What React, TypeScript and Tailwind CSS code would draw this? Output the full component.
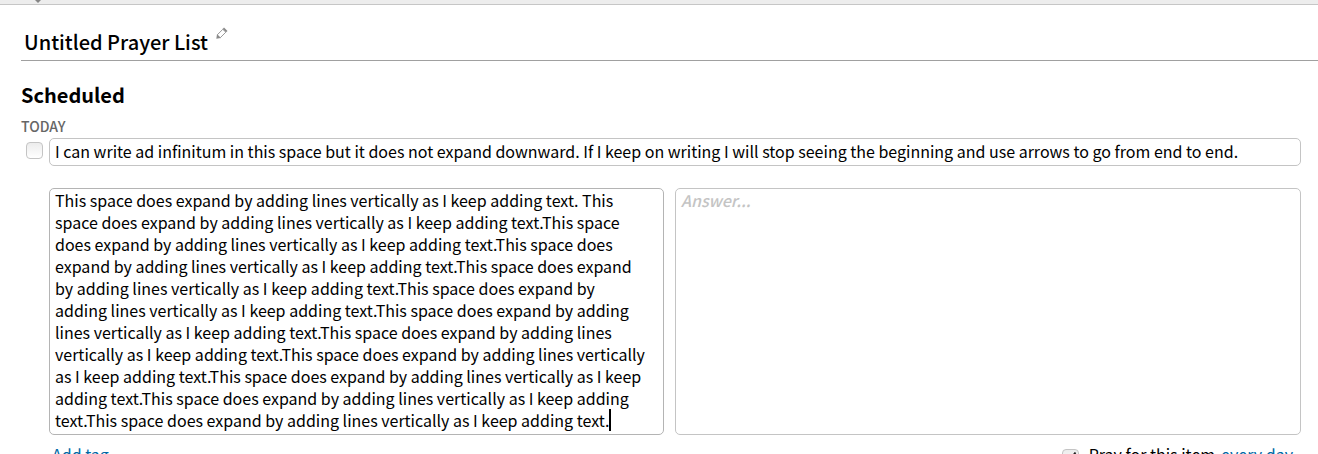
const NOTE_SENTENCE = "This space does expand by adding lines vertically as I keep adding text.";
const NOTE = `${NOTE_SENTENCE} ${NOTE_SENTENCE.repeat(11)}`;

function PencilIcon() {
  return (
    <svg viewBox="0 0 12 12" className="w-3 h-3" aria-hidden="true">
      <path d="M8 .6 11.500 3.900 9.800 5.500 6.500 2.300Z" fill="#8a8a8a" />
      <path d="M6.800 2.300 9.800 5.200 4.200 10.800 1.200 7.900Z" fill="#fff" stroke="#999" strokeWidth="1" />
      <path d="M1 7.300 4.700 10.900.3 11.800Z" fill="#8a8a8a" />
    </svg>
  );
}

function TopBar() {
  return (
    <div className="h-[5px] bg-[#ededed] border-b border-[#c6c6c6] overflow-hidden">
      <svg viewBox="0 0 6 3" className="block ml-[35px] w-[6px] h-[3px]" aria-hidden="true">
        <path d="M0 0H6L3 3Z" fill="#858585" />
      </svg>
    </div>
  );
}

function ItemFooter() {
  return (
    <div className="flex justify-between pl-[3px] pr-2 pt-2 leading-[22px]">
      <a href="#tag" className="text-[#0068a5]">
        Add tag
      </a>
      <div className="flex">
        <label className="flex">
          <input type="checkbox" defaultChecked className="peer sr-only" />
          <span className="mt-[6px] mr-[10px] w-[17px] h-[17px] rounded border border-[#c4c4c4] bg-linear-to-b from-[#ececec] to-white">
            <svg viewBox="0 0 15 15" className="w-[15px] h-[15px]" aria-hidden="true">
              <path d="M3 8 6 11.500 12.500 2.500" fill="none" stroke="#222" strokeWidth="2" />
            </svg>
          </span>
          Pray for this item
        </label>
        <a href="#schedule" className="ml-[6px] text-[#0068a5]">
          every day
        </a>
      </div>
    </div>
  );
}

export default function App() {
  return (
    <div className="h-screen overflow-hidden bg-white text-black text-base font-['Noto_Sans_CJK_SC',sans-serif]">
      <TopBar />
      <main className="pl-[21px]">
        <header className="flex items-start pt-[22px] pl-[3px] pb-1 border-b border-[#a0a0a0]">
          <h1 className="text-[20px] leading-[29px] font-medium">Untitled Prayer List</h1>
          <button type="button" aria-label="Rename list" className="ml-2">
            <PencilIcon />
          </button>
        </header>

        <section className="pr-[17px]">
          <h2 className="pt-[19px] text-[20px] leading-[29px] font-bold">Scheduled</h2>
          <h3 className="pt-[7px] pb-[2px] text-[14px] leading-[20px] font-medium text-[#666]">TODAY</h3>

          <div className="flex">
            <div className="w-7 pl-[5px] pt-1">
              <input
                type="checkbox"
                aria-label="Prayed"
                className="block appearance-none w-[17px] h-[17px] rounded border border-[#c4c4c4] bg-linear-to-b from-[#ececec] to-white"
              />
            </div>
            <div className="flex-1 min-w-0">
              <input
                type="text"
                aria-label="Title"
                defaultValue="I can write ad infinitum in this space but it does not expand downward. If I keep on writing I will stop seeing the beginning and use arrows to go from end to end."
                className="block w-full h-7 px-[5px] pb-[3px] rounded-[5px] border border-[#c4c4c4]"
              />

              <div className="mt-[22px] grid grid-cols-[615fr_626fr] gap-[11px]">
                <div className="relative">
                  <textarea
                    aria-label="Notes"
                    rows={11}
                    defaultValue={NOTE}
                    className="block w-full pl-[5px] pr-[14px] pb-[3px] leading-[22px] resize-none overflow-hidden rounded-[5px] border border-[#b4b4b4] outline-none"
                  />
                  <span className="absolute left-[560px] bottom-1 w-[2px] h-[22px] bg-black" />
                </div>
                <textarea
                  aria-label="Answer"
                  rows={11}
                  placeholder="Answer..."
                  className="block w-full px-[5px] pb-[3px] leading-[22px] resize-none overflow-hidden rounded-[5px] border border-[#c4c4c4] placeholder:italic placeholder:font-medium placeholder:text-[#c4c4c4]"
                />
              </div>

              <ItemFooter />
            </div>
          </div>
        </section>
      </main>
    </div>
  );
}
